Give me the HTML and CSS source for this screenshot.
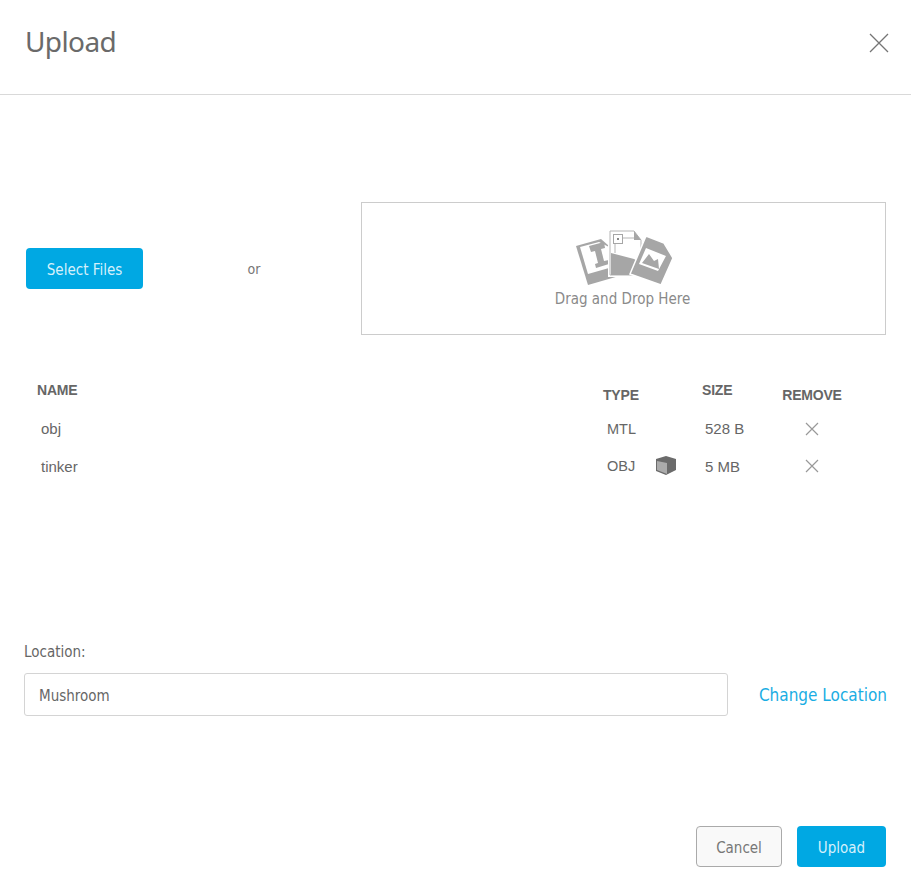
FILE: index.html
```html
<!DOCTYPE html>
<html lang="en">
<head>
<meta charset="utf-8">
<title>Upload</title>
<link rel="stylesheet" href="styles.css">
</head>
<body>
<div class="dialog">
  <header class="header">
    <h1 class="title">Upload</h1>
    <svg class="close" width="20" height="20" viewBox="0 0 20 20"><path d="M1 1L19 19M19 1L1 19" stroke="#757575" stroke-width="1.3" fill="none"/></svg>
  </header>
  <section class="source">
    <button class="btn btn-primary btn-select">Select Files</button>
    <span class="or">or</span>
    <div class="drop">
      <svg class="drop-icon" width="108" height="66" viewBox="0 0 108 66">
        <path d="M5 20L30 13L38 20L55 48L17 59Z" fill="#a6a6a6"/>
        <path d="M9 21L28 16L38 21V42L17 48Z" fill="#fff"/>
        <path d="M18 20L33 16L34 22L30 23L33 35L38 34V38L25 42L24 38L27 37L24 25L20 26Z" fill="#a6a6a6"/>
        <path d="M37 3H64L72 13V51H37Z" fill="#fff"/>
        <path d="M39 5H63L70 14V49H39Z" fill="#fff" stroke="#b5b5b5"/>
        <path d="M40 27L63 33L68 36V49H40Z" fill="#a6a6a6"/>
        <path d="M63 5L70 14H63Z" fill="#a6a6a6"/>
        <path d="M52 12H63M44 18V27" stroke="#b5b5b5" fill="none"/>
        <rect x="42.500" y="8.500" width="9" height="9" fill="#fff" stroke="#a6a6a6"/>
        <rect x="46" y="12" width="2" height="2" fill="#888"/>
        <path d="M75 10L93 17L102 32L90 59L59 48Z" fill="#a6a6a6" stroke="#fff" stroke-width="1.5"/>
        <path d="M75 22L95 30L87 45L68 38Z" fill="#fff"/>
        <path d="M71 37L78 28L83 35L87 33L88 43Z" fill="#a6a6a6"/>
        <circle cx="90" cy="31" r="1.6" fill="#fff"/>
      </svg>
      <span class="drop-text">Drag and Drop Here</span>
    </div>
  </section>
  <section class="files">
    <div class="row row-head">
      <span class="col-name">NAME</span>
      <span class="col-type">TYPE</span>
      <span class="col-size">SIZE</span>
      <span class="col-remove col-remove-head">REMOVE</span>
    </div>
    <div class="row row-file">
      <span class="col-name cell-name">obj</span>
      <span class="col-type cell-type">MTL</span>
      <span class="col-size cell-size">528 B</span>
      <span class="col-remove"><svg width="14" height="14" viewBox="0 0 14 14"><path d="M1 1L13 13M13 1L1 13" stroke="#999" stroke-width="1.2" fill="none"/></svg></span>
    </div>
    <div class="row row-file">
      <span class="col-name cell-name">tinker</span>
      <span class="col-type cell-type">OBJ<svg class="cube" width="22" height="20" viewBox="0 0 22 20"><path d="M1 3L11 0L21 3V14L11 19L1 15Z" fill="#6b6b6b"/><path d="M2 5L12 7V18L2 14Z" fill="#ababab"/></svg></span>
      <span class="col-size cell-size">5 MB</span>
      <span class="col-remove"><svg width="14" height="14" viewBox="0 0 14 14"><path d="M1 1L13 13M13 1L1 13" stroke="#999" stroke-width="1.2" fill="none"/></svg></span>
    </div>
  </section>
  <section class="location">
    <label class="location-label">Location:</label>
    <div class="location-row">
      <input class="location-input" type="text" value="Mushroom">
      <a class="location-link">Change Location</a>
    </div>
  </section>
  <footer class="footer">
    <button class="btn btn-cancel">Cancel</button>
    <button class="btn btn-primary btn-upload">Upload</button>
  </footer>
</div>
</body>
</html>
```
FILE: styles.css
```css
* { box-sizing: border-box; }
html, body { margin: 0; padding: 0; background: #fff; }
body { font-family: "DejaVu Sans", "Noto Sans", sans-serif; font-stretch: condensed; color: #666; }
.dialog { width: 911px; height: 896px; display: flex; flex-direction: column; }
.header { height: 95px; border-bottom: 1px solid #d9d9d9; display: flex; justify-content: space-between; align-items: flex-start; padding: 21px 22px 0 25px; }
.title { margin: 0; font-family: "Noto Sans", sans-serif; font-stretch: normal; font-size: 28px; line-height: 40px; font-weight: 400; color: #6a6a6a; letter-spacing: -0.6px; }
.close { margin-top: 12px; }
.source { display: flex; align-items: center; margin: 107px 25px 0 26px; height: 133px; }
.btn { font-family: inherit; font-stretch: condensed; font-size: 15px; border-radius: 4px; cursor: pointer; padding: 3px 0 0; }
.btn-primary { background: #00a8e3; color: #d5f0fb; border: 0; }
.btn-select { width: 117px; height: 41px; }
.or { width: 218px; text-align: center; font-size: 14px; color: #777; padding-left: 4px; }
.drop { flex: 1; height: 133px; border: 1px solid #ccc; display: flex; flex-direction: column; align-items: center; padding-top: 23px; }
.drop-icon { display: block; margin-left: 2px; }
.drop-text { font-size: 15px; line-height: 19px; color: #8a8a8a; margin-top: -2px; margin-left: -2px; }
.files { margin-top: 44px; padding: 0 25px 0 37px; font-family: "Liberation Sans", Arial, sans-serif; font-stretch: normal; font-size: 14.500px; }
.row { display: flex; }
.row-head { height: 31px; font-size: 14px; font-weight: 700; color: #666; letter-spacing: -0.2px; line-height: 22px; }
.row-file { height: 37.500px; align-items: center; color: #666; }
.col-name { width: 566px; }
.col-type { width: 99px; display: flex; align-items: center; }
.col-size { width: 79px; }
.col-remove { width: 62px; text-align: center; }
.col-remove-head { margin-top: 5px; white-space: nowrap; }
.cell-name { padding-left: 4px; font-size: 15px; }
.cell-type { padding-left: 4px; }
.cell-size { padding-left: 3px; font-size: 15px; }
.col-remove svg { display: block; margin: 0 auto; }
.cube { margin-left: 20px; }
.location { margin-top: 158px; padding: 0 24px; }
.location-label { display: block; font-size: 15px; line-height: 19px; color: #666; }
.location-row { display: flex; align-items: center; margin-top: 11px; gap: 31px; }
.location-input { width: 704px; height: 43px; border: 1px solid #d4d4d4; border-radius: 3px; padding: 3px 14px 0 14px; font-family: inherit; font-stretch: condensed; font-size: 15px; color: #666; outline: none; }
.location-link { font-size: 17px; color: #1aade3; white-space: nowrap; padding-top: 1px; }
.footer { margin-top: 110px; padding: 0 25px; display: flex; justify-content: flex-end; gap: 15px; }
.btn-cancel { width: 86px; height: 41px; background: #f9f9f9; border: 1px solid #aaa; color: #777; }
.btn-upload { width: 89px; height: 41px; }
```
